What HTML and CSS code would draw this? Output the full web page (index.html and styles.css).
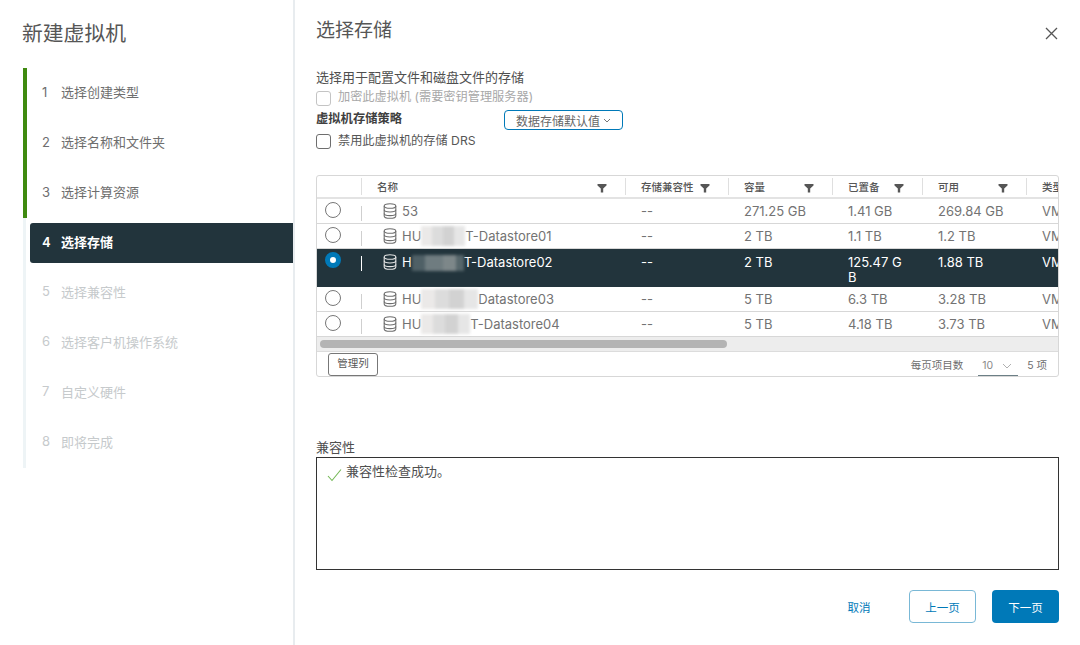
FILE: index.html
```html
<!DOCTYPE html>
<html lang="zh-CN">
<head>
    <meta charset="UTF-8">
    <title>新建虚拟机</title>
    <link rel="stylesheet" href="styles.css">
</head>
<body>
    <svg class="defs" width="0" height="0">
        <symbol id="filter" viewBox="0 0 10 10"><path d="M0.5 1H9.5V2.6L6.2 5.6V9.5H3.8V5.6L0.5 2.6Z"/></symbol>
        <symbol id="db" viewBox="0 0 14 16"><g fill="none" stroke="currentColor" stroke-width="1.1"><ellipse cx="7" cy="3" rx="5.8" ry="2.3"/><path d="M1.2 3V13C1.2 14.3 3.8 15.3 7 15.3S12.8 14.3 12.8 13V3"/><path d="M1.2 6.8C1.2 8 3.8 9 7 9S12.8 8 12.8 6.8"/><path d="M1.2 10.4C1.2 11.6 3.8 12.6 7 12.6S12.8 11.6 12.8 10.4"/></g></symbol>
    </svg>

    <aside class="sidebar">
        <h1 class="wizard-title">新建虚拟机</h1>
        <ol class="steps">
            <li class="step done"><span class="num">1</span>选择创建类型</li>
            <li class="step done"><span class="num">2</span>选择名称和文件夹</li>
            <li class="step done"><span class="num">3</span>选择计算资源</li>
            <li class="step current"><div class="step-inner"><span class="num">4</span>选择存储</div></li>
            <li class="step"><span class="num">5</span>选择兼容性</li>
            <li class="step"><span class="num">6</span>选择客户机操作系统</li>
            <li class="step"><span class="num">7</span>自定义硬件</li>
            <li class="step"><span class="num">8</span>即将完成</li>
        </ol>
    </aside>

    <main class="main">
        <div class="title-row">
            <h2 class="page-title">选择存储</h2>
            <svg class="close" width="13" height="13" viewBox="0 0 13 13"><path d="M1 1L12 12M12 1L1 12"/></svg>
        </div>

        <div class="line desc">选择用于配置文件和磁盘文件的存储</div>
        <label class="line check disabled"><span class="box"></span>加密此虚拟机 (需要密钥管理服务器)</label>
        <div class="line policy">
            <b class="policy-label">虚拟机存储策略</b>
            <button class="policy-btn">数据存储默认值<svg width="8" height="5" viewBox="0 0 8 5"><path d="M1 1L4 4L7 1"/></svg></button>
        </div>
        <label class="line check"><span class="box"></span>禁用此虚拟机的存储 DRS</label>

        <div class="grid">
            <div class="row head">
                <div class="cell-radio"><span class="sep"></span></div>
                <div class="th">名称<svg class="funnel"><use href="#filter"/></svg></div>
                <div class="th">存储兼容性<svg class="funnel"><use href="#filter"/></svg></div>
                <div class="th">容量<svg class="funnel"><use href="#filter"/></svg></div>
                <div class="th">已置备<svg class="funnel"><use href="#filter"/></svg></div>
                <div class="th">可用<svg class="funnel"><use href="#filter"/></svg></div>
                <div class="th last">类型</div>
            </div>
            <div class="row">
                <div class="cell-radio"><span class="radio"></span><span class="sep"></span></div>
                <div class="td name"><svg class="db"><use href="#db"/></svg>53</div>
                <div class="td">--</div><div class="td">271.25 GB</div><div class="td">1.41 GB</div><div class="td">269.84 GB</div><div class="td type">VMFS 6</div>
            </div>
            <div class="row">
                <div class="cell-radio"><span class="radio"></span><span class="sep"></span></div>
                <div class="td name"><svg class="db"><use href="#db"/></svg>HU<span class="mask m1"></span>T-Datastore01</div>
                <div class="td">--</div><div class="td">2 TB</div><div class="td">1.1 TB</div><div class="td">1.2 TB</div><div class="td type">VMFS 6</div>
            </div>
            <div class="row selected">
                <div class="cell-radio"><span class="radio"></span><span class="sep"></span></div>
                <div class="td name"><svg class="db"><use href="#db"/></svg>H<span class="mask m2"></span>T-Datastore02</div>
                <div class="td">--</div><div class="td">2 TB</div><div class="td">125.47 GB</div><div class="td">1.88 TB</div><div class="td type">VMFS 6</div>
            </div>
            <div class="row">
                <div class="cell-radio"><span class="radio"></span><span class="sep"></span></div>
                <div class="td name"><svg class="db"><use href="#db"/></svg>HU<span class="mask m3"></span>Datastore03</div>
                <div class="td">--</div><div class="td">5 TB</div><div class="td">6.3 TB</div><div class="td">3.28 TB</div><div class="td type">VMFS 6</div>
            </div>
            <div class="row">
                <div class="cell-radio"><span class="radio"></span><span class="sep"></span></div>
                <div class="td name"><svg class="db"><use href="#db"/></svg>HU<span class="mask m4"></span>T-Datastore04</div>
                <div class="td">--</div><div class="td">5 TB</div><div class="td">4.18 TB</div><div class="td">3.73 TB</div><div class="td type">VMFS 6</div>
            </div>
            <div class="scrollbar"><div class="thumb"></div></div>
            <div class="grid-foot">
                <button class="manage">管理列</button>
                <div class="pager">
                    <span>每页项目数</span>
                    <span class="page-size">10<svg width="10" height="6" viewBox="0 0 10 6"><path d="M1 1L5 5L9 1"/></svg></span>
                    <span>5 项</span>
                </div>
            </div>
        </div>

        <div class="compat-label">兼容性</div>
        <div class="compat-box">
            <svg width="15" height="14" viewBox="0 0 15 14"><path d="M1 8L5 12.5L14 1.5"/></svg>
            <span>兼容性检查成功。</span>
        </div>

        <div class="actions">
            <button class="btn link">取消</button>
            <button class="btn outline">上一页</button>
            <button class="btn primary">下一页</button>
        </div>
    </main>
</body>
</html>
```

FILE: styles.css
```css
* {
    margin: 0;
    padding: 0;
    box-sizing: border-box;
}
body {
    font-family: "Inter", "Noto Sans CJK SC", sans-serif;
    font-size: 13px;
    color: #565656;
    background-color: #ffffff;
    width: 1080px;
    height: 645px;
    overflow: hidden;
    display: flex;
}
button {
    font-family: inherit;
    background: none;
    cursor: pointer;
}
.defs {
    position: absolute;
}

/* left wizard nav */
.sidebar {
    width: 295px;
    flex-shrink: 0;
    border-right: 2px solid #e8ecef;
    padding-top: 20px;
}
.wizard-title {
    font-size: 20.8px;
    font-weight: 400;
    line-height: 28px;
    margin-left: 22px;
    margin-bottom: 20px;
    color: #565656;
}
.steps {
    list-style: none;
    margin-left: 23px;
}
.step {
    height: 50px;
    display: flex;
    align-items: center;
    padding-left: 16px;
    padding-bottom: 4px;
    border-left: 3px solid #eef4f6;
    color: #c6cacc;
}
.step .num {
    width: 19px;
    flex-shrink: 0;
}
.step.done {
    border-left: 4px solid #3f8a10;
    padding-left: 15px;
    padding-bottom: 3px;
    color: #6e6e6e;
}
.step.current {
    padding: 5px 0 5px 4px;
}
.step-inner {
    flex: 1;
    height: 40px;
    display: flex;
    align-items: center;
    padding-left: 12px;
    padding-bottom: 3px;
    background-color: #22343c;
    color: #ffffff;
    font-weight: 600;
    border-radius: 3px 0 0 3px;
}

/* main panel */
.main {
    flex: 1;
    min-width: 0;
    padding: 0 21px 0 21px;
}
.title-row {
    height: 65px;
    display: flex;
    justify-content: space-between;
    padding-top: 19px;
}
.page-title {
    font-size: 19px;
    font-weight: 400;
    line-height: 24px;
}
.close {
    margin-top: 8px;
    margin-right: 1px;
}
.close path {
    stroke: #565656;
    stroke-width: 1.3;
    fill: none;
}
.line {
    display: flex;
    align-items: center;
    height: 22px;
}
.desc {
    color: #4f4f4f;
}
.check {
    gap: 7px;
    font-size: 12.2px;
    padding-bottom: 2px;
}
.check.disabled {
    height: 21px;
    padding-bottom: 3px;
    color: #a8a8a8;
}
.box {
    width: 15px;
    height: 15px;
    margin-top: 3px;
    border: 1px solid #6e6e6e;
    border-radius: 3px;
}
.disabled .box {
    margin-top: 4px;
    border-color: #c4c4c4;
}
.policy-label {
    width: 188px;
    margin-bottom: 2px;
    font-size: 12.3px;
    color: #3f3f3f;
}
.policy-btn {
    width: 119px;
    height: 20px;
    margin-top: 2px;
    border: 1px solid #0079b8;
    border-radius: 4px;
    color: #666666;
    font-size: 12px;
    display: flex;
    align-items: center;
    justify-content: center;
    gap: 3px;
}
.policy-btn path {
    fill: none;
    stroke: #777777;
}

/* datastore table */
.grid {
    margin-top: 23px;
    height: 202px;
    border: 1px solid #d7d7d7;
    border-radius: 3px;
    overflow: hidden;
}
.row {
    display: grid;
    grid-template-columns: 45px 263px 103px 104px 90px 104px 60px;
    border-bottom: 1px solid #d7d7d7;
    height: 25px;
}
.row.head {
    height: 23px;
    border-bottom-width: 2px;
    border-bottom-color: #e3e3e3;
    align-items: center;
}
.row.selected {
    height: 38px;
    background-color: #22343c;
    color: #ffffff;
    border-bottom-color: #22343c;
}
.cell-radio {
    display: flex;
    align-items: flex-start;
    justify-content: flex-end;
    padding-top: 4px;
    position: relative;
}
.head .cell-radio {
    padding-top: 0;
    align-items: center;
}
.sep {
    width: 1px;
    height: 15px;
    margin-top: 3px;
    background-color: #cfcfcf;
}
.head .sep {
    height: 17px;
    margin-top: 0;
    background-color: #dfdfdf;
}
.selected .sep {
    background-color: #ffffff;
}
.radio {
    position: absolute;
    left: 8px;
    top: 3px;
    width: 16px;
    height: 16px;
    border: 1px solid #777777;
    border-radius: 50%;
    background-color: #ffffff;
}
.selected .radio {
    border: 5px solid #0079b8;
}
.th {
    height: 17px;
    display: flex;
    align-items: center;
    justify-content: space-between;
    padding: 0 18px 0 15px;
    border-left: 1px solid #dfdfdf;
    font-size: 10.5px;
    font-weight: 500;
    color: #565656;
    white-space: nowrap;
}
.th:nth-child(2) {
    border-left: none;
}
.funnel {
    width: 10px;
    height: 10px;
    fill: #565656;
    margin-top: 2px;
}
.td {
    padding: 5px 16px 2px 16px;
    line-height: 15px;
    color: #737373;
    word-break: break-all;
}
.row.selected .td {
    padding-top: 6px;
    color: #ffffff;
}
.td.type {
    white-space: nowrap;
    word-break: normal;
}
.td.name {
    display: flex;
    align-items: flex-start;
    word-break: normal;
    white-space: nowrap;
    padding-left: 21px;
    padding-right: 0;
}
.db {
    width: 14px;
    height: 16px;
    flex-shrink: 0;
    margin-right: 5px;
    margin-top: -1px;
    color: #6e6e6e;
}
.selected .db {
    color: #e4e4e4;
}

/* the blurred out part of the datastore names */
.mask {
    display: block;
    height: 20px;
    margin-top: -3px;
    filter: blur(1.5px);
    background: linear-gradient(90deg, #ebe9e8 0 25%, #dcdcdc 25% 50%, #d2d2d2 50% 75%, #e6e6e6 75%);
}
.m1 { width: 44px; }
.m2 { width: 52px; height: 16px; margin-top: 0; background: linear-gradient(90deg, #4f6066 0 25%, #6f7c80 25% 60%, #7d8789 60% 85%, #56666b 85%); }
.m3 { width: 57px; }
.m4 { width: 49px; }

.scrollbar {
    height: 15px;
    padding: 3px 3px;
    background-color: #ededed;
    border-bottom: 1px solid #dcdcdc;
}
.thumb {
    width: 407px;
    height: 8px;
    border-radius: 4px;
    background-color: #b4b4b4;
}
.grid-foot {
    display: flex;
    justify-content: space-between;
    padding: 1px 11px 0 11px;
}
.manage {
    width: 50px;
    height: 23px;
    padding-bottom: 4px;
    border: 1px solid #777777;
    border-radius: 3px;
    font-size: 10.5px;
    color: #565656;
}
.pager {
    display: flex;
    align-items: center;
    font-size: 10.5px;
    color: #6e6e6e;
}
.page-size {
    width: 40px;
    height: 23px;
    margin: 0 9px 0 15px;
    padding: 3px 0 0 4px;
    display: flex;
    align-items: center;
    gap: 9px;
    border-bottom: 1px solid #6c7f86;
    color: #8a8a8a;
}
.page-size path {
    fill: none;
    stroke: #b0b0b0;
}

/* compatibility */
.compat-label {
    margin-top: 60px;
    height: 20px;
    line-height: 20px;
    color: #4f4f4f;
}
.compat-box {
    height: 113px;
    border: 1px solid #333333;
    padding: 5px 10px;
    display: flex;
    align-items: flex-start;
    gap: 4px;
    color: #4f4f4f;
    line-height: 16px;
}
.compat-box svg {
    margin-top: 5px;
    flex-shrink: 0;
}
.compat-box path {
    fill: none;
    stroke: #74b856;
    stroke-width: 1.1;
}

/* bottom buttons */
.actions {
    margin-top: 20px;
    display: flex;
    justify-content: flex-end;
    gap: 16px;
}
.btn {
    width: 67px;
    height: 33px;
    font-size: 11.5px;
    border-radius: 4px;
    border: 1px solid transparent;
}
.btn.link {
    color: #0079b8;
    width: 56px;
    margin-right: 6px;
}
.btn.outline {
    border-color: #79b8d6;
    color: #0079b8;
}
.btn.primary {
    background-color: #0079b8;
    color: #ffffff;
}
```
